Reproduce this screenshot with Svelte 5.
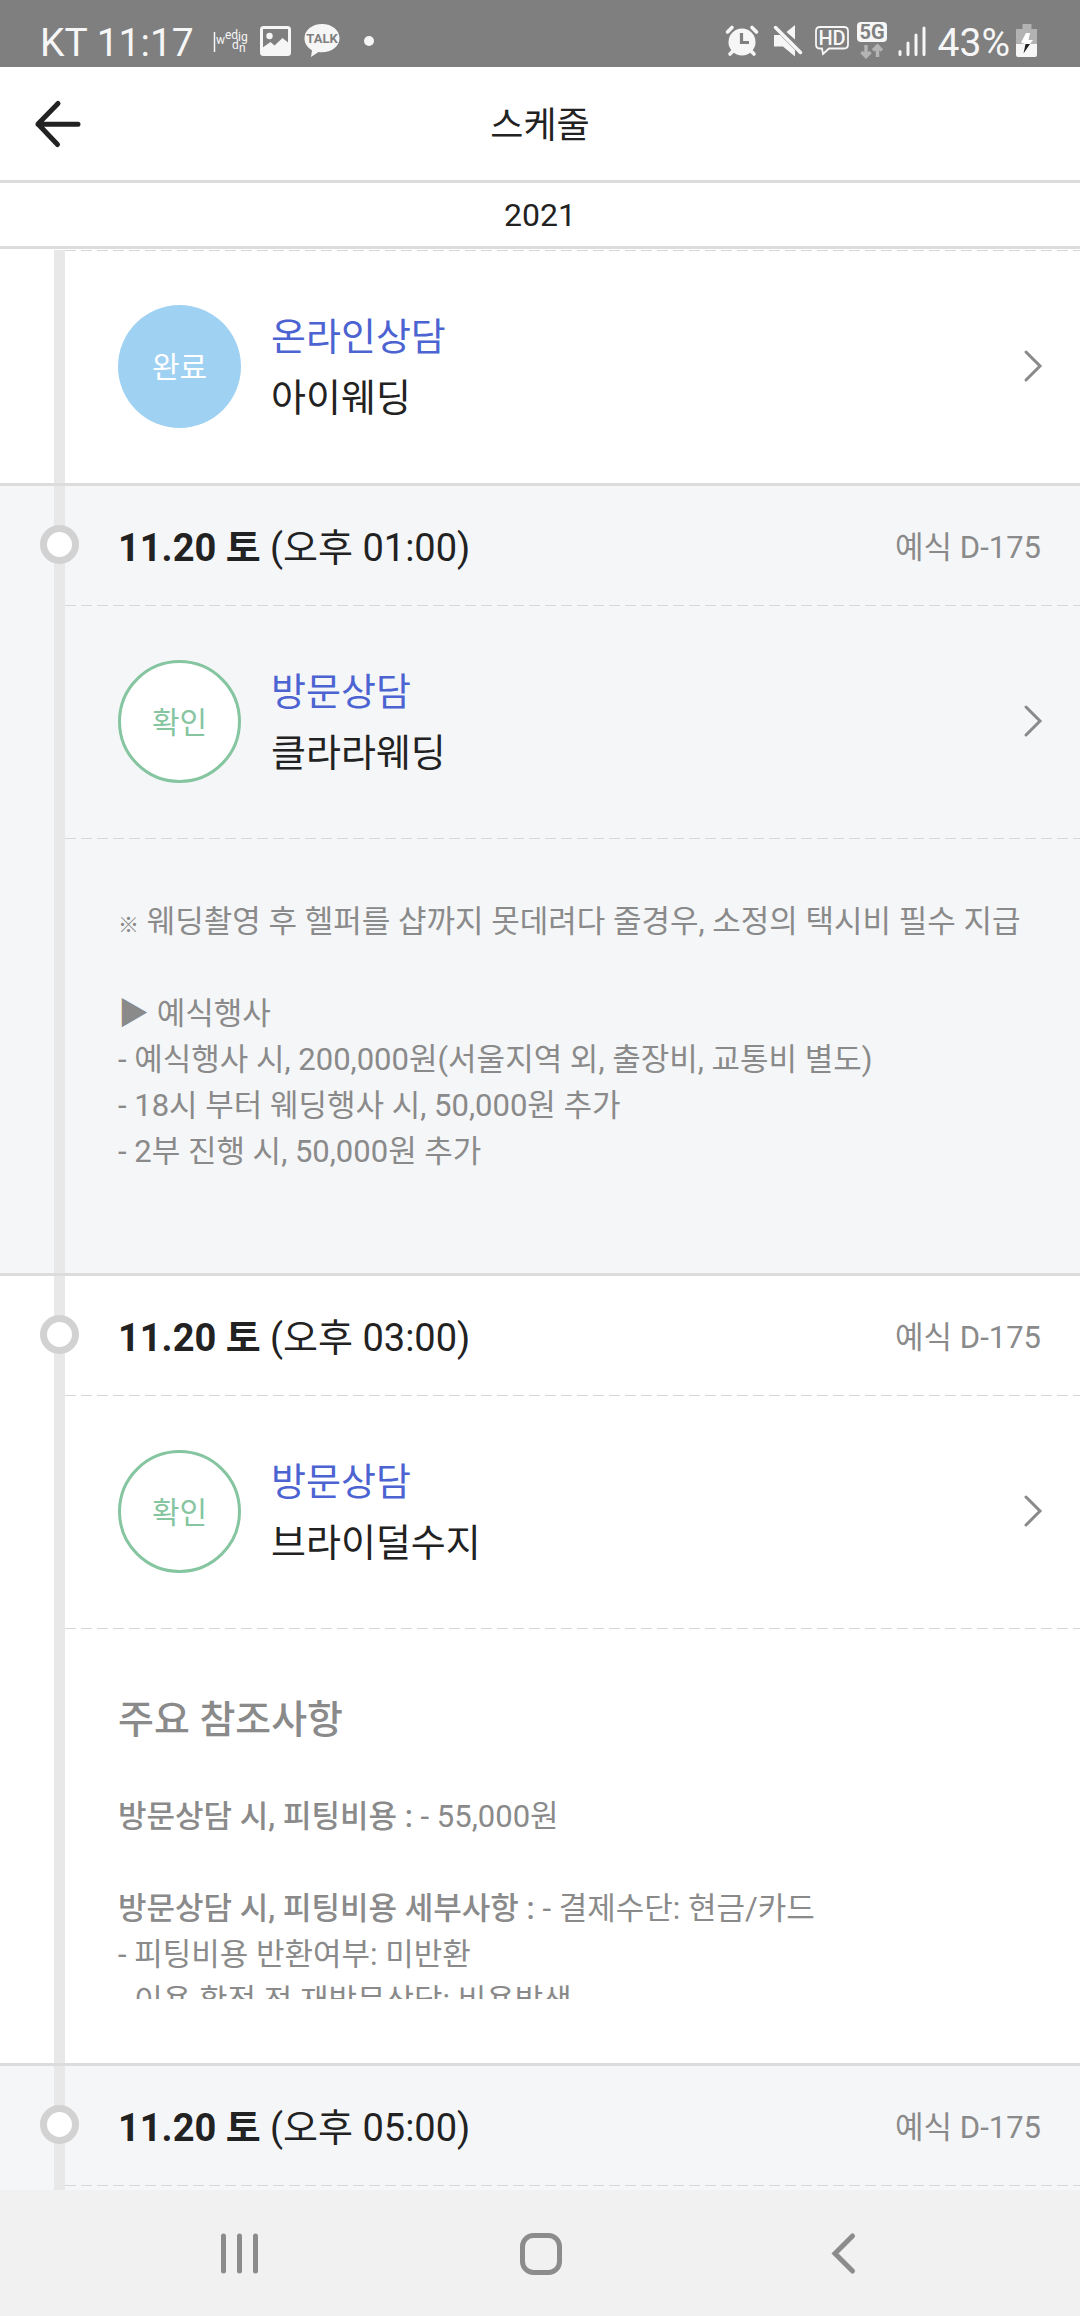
<script lang="ts">
  interface Note {
    mark?: string;
    label?: string;
    text: string;
  }

  interface Entry {
    date?: string;
    time?: string;
    dday?: string;
    status?: "done" | "confirm";
    kind?: string;
    shop?: string;
    heading?: string;
    notes?: Note[];
  }

  const statusLabel = { done: "완료", confirm: "확인" };

  const entries: Entry[] = [
    { status: "done", kind: "온라인상담", shop: "아이웨딩" },
    {
      date: "11.20 토",
      time: "(오후 01:00)",
      dday: "예식 D-175",
      status: "confirm",
      kind: "방문상담",
      shop: "클라라웨딩",
      notes: [
        { mark: "※", text: "웨딩촬영 후 헬퍼를 샵까지 못데려다 줄경우, 소정의 택시비 필수 지급" },
        { text: "" },
        { text: "▶ 예식행사" },
        { text: "- 예식행사 시, 200,000원(서울지역 외, 출장비, 교통비 별도)" },
        { text: "- 18시 부터 웨딩행사 시, 50,000원 추가" },
        { text: "- 2부 진행 시, 50,000원 추가" },
        { text: "" },
      ],
    },
    {
      date: "11.20 토",
      time: "(오후 03:00)",
      dday: "예식 D-175",
      status: "confirm",
      kind: "방문상담",
      shop: "브라이덜수지",
      heading: "주요 참조사항",
      notes: [
        { label: "방문상담 시, 피팅비용 :", text: "- 55,000원" },
        { text: "" },
        { label: "방문상담 시, 피팅비용 세부사항 :", text: "- 결제수단: 현금/카드" },
        { text: "- 피팅비용 반환여부: 미반환" },
        { text: "- 이용 확정 전 재방문상담: 비용발생" },
      ],
    },
    { date: "11.20 토", time: "(오후 05:00)", dday: "예식 D-175" },
  ];
</script>

<div class="app">
  <div class="status-bar">
    <div class="status-left">
      <span class="status-text">KT 11:17</span>
      <svg class="brand" width="34" height="34" viewBox="0 0 34 34">
        <path d="M1.500 8 V28" stroke="#f6f6f6" stroke-width="1.500" />
        <text>
          <tspan x="3" y="20">w</tspan><tspan x="12" y="15">ed</tspan><tspan x="19" y="25">d</tspan><tspan x="25" y="17">ig</tspan><tspan x="26" y="28">n</tspan>
        </text>
      </svg>
      <svg class="gallery" width="31" height="30" viewBox="0 0 31 30">
        <rect x="1.5" y="1.5" width="28" height="27" rx="2" fill="none" stroke="#f6f6f6" stroke-width="3" />
        <circle cx="9.5" cy="10" r="3.2" fill="#f6f6f6" />
        <path d="M2 22 L10.500 16 L14.500 19.500 L22.500 12 L30 18 V28 H2 Z" fill="#f6f6f6" />
      </svg>
      <svg class="talk" width="36" height="34" viewBox="0 0 36 34">
        <path d="M18 0 C8 0 .5 6.200 .5 14.200 C.5 19.500 3.500 23.800 8 26.200 L7 33 L14.500 28 C26 29.500 35.500 23 35.500 14.200 C35.500 6.200 28 0 18 0 Z" fill="#f6f6f6" />
        <text x="18" y="19" text-anchor="middle">TALK</text>
      </svg>
      <span class="more"></span>
    </div>
    <div class="status-right">
      <svg width="34" height="32" viewBox="0 0 34 32">
        <g stroke="#f6f6f6" stroke-width="3.600" stroke-linecap="round">
          <path d="M2.500 7 L7 2.500 M31.500 7 L27 2.500" />
          <path d="M5 29 L9 25 M29 29 L25 25" />
        </g>
        <circle cx="17" cy="17" r="13.500" fill="#f6f6f6" />
        <path d="M16.500 8 V17.500 H24" fill="none" stroke="#7f7f7f" stroke-width="3.200" />
      </svg>
      <svg class="mute" width="30" height="32" viewBox="0 0 30 32">
        <path d="M1 10 H7 L22 25 V31.500 L10 21.500 H1 Z M13.500 7 L22 0 V14.500 Z" fill="#f6f6f6" />
        <path d="M2.500 2.500 L27.500 27.500" stroke="#f6f6f6" stroke-width="3.500" stroke-linecap="round" />
      </svg>
      <svg class="hd" width="34" height="30" viewBox="0 0 34 30">
        <path d="M5 1 H29 Q33 1 33 5 V18.500 Q33 22.500 29 22.500 H14 L8 28 L7 22.500 H5 Q1 22.500 1 18.500 V5 Q1 1 5 1 Z" fill="none" stroke="#f6f6f6" stroke-width="1.800" />
        <text x="17" y="19" text-anchor="middle">HD</text>
      </svg>
      <svg class="network" width="30" height="38" viewBox="0 0 30 38">
        <rect width="30" height="20" rx="4" fill="#f6f6f6" />
        <text x="15" y="17" text-anchor="middle">5G</text>
        <path d="M9 23 V34 M4.500 30 L9 34.500 L13.500 30 M20.500 35 V25 M16 28.500 L20.500 24 L25 28.500" fill="none" stroke="#b4b4b4" stroke-width="3.500" />
      </svg>
      <svg class="signal" width="28" height="30" viewBox="0 0 28 30">
        <path d="M2 25.500 V28.500 M10 17 V28.500 M18 9 V28.500 M26 2 V28.500" stroke="#f6f6f6" stroke-width="3" stroke-linecap="round" />
      </svg>
      <span class="status-text">43%</span>
      <svg class="battery" width="22" height="34" viewBox="0 0 22 34">
        <path d="M6.500 0 H15.500 V5 H21 V20 H0 V5 H6.500 Z" fill="#b2b2b2" />
        <path d="M0 20 H21 V31 Q21 33 19 33 H2 Q0 33 0 31 Z" fill="#f6f6f6" />
        <path d="M10 9 H14 L12.500 16 H17 L14 20 H9 L5 18.500 Z" fill="#fff" />
        <path d="M9.500 20 H14 L7.500 29.500 Z" fill="#222" />
      </svg>
    </div>
  </div>

  <header class="header">
    <button class="back" aria-label="뒤로">
      <svg width="46" height="46" viewBox="0 0 46 46">
        <path d="M23 2.500 L3 23 L22.500 43.500 M3 23.300 H43" fill="none" stroke="#222" stroke-width="5" stroke-linecap="round" stroke-linejoin="round" />
      </svg>
    </button>
    <h1>스케줄</h1>
  </header>
  <div class="year">2021</div>

  <main class="timeline">
    {#each entries as entry}
      <section class="entry">
        <div class="rail">
          {#if entry.date}<span class="dot"></span>{/if}
        </div>
        <div class="body">
          {#if entry.date}
            <div class="when">
              <h2><b>{entry.date}</b> {entry.time}</h2>
              <span class="dday">{entry.dday}</span>
            </div>
          {/if}
          <div class="dash"></div>
          {#if entry.status}
            <a class="card" href="#detail">
              <span class="badge badge--{entry.status}">{statusLabel[entry.status]}</span>
              <span class="info">
                <span class="kind">{entry.kind}</span>
                <span>{entry.shop}</span>
              </span>
              <svg width="18" height="32" viewBox="0 0 18 32">
                <path d="M2 2 L16 16 L2 30" fill="none" stroke="#8a8a8a" stroke-width="3" stroke-linecap="round" />
              </svg>
            </a>
          {/if}
          {#if entry.notes}
            <div class="dash"></div>
            <div class="notes">
              {#if entry.heading}<h3>{entry.heading}</h3>{/if}
              {#each entry.notes as note}
                <p>
                  {#if note.mark}<span class="mark">{note.mark}</span>{/if}
                  {#if note.label}<b>{note.label}</b>{/if}
                  {note.text}
                </p>
              {/each}
            </div>
          {/if}
        </div>
      </section>
    {/each}
  </main>

  <nav class="nav">
    <button aria-label="최근 앱">
      <svg width="44" height="44" viewBox="0 0 44 44">
        <path d="M6.500 5 V40 M22.500 5 V40 M38.500 5 V40" stroke="#8c8c8c" stroke-width="5" stroke-linecap="round" />
      </svg>
    </button>
    <button aria-label="홈">
      <svg width="44" height="44" viewBox="0 0 44 44">
        <rect x="4.500" y="4.500" width="37" height="37" rx="11" fill="none" stroke="#8c8c8c" stroke-width="5" />
      </svg>
    </button>
    <button aria-label="이전">
      <svg width="44" height="44" viewBox="0 0 44 44">
        <path d="M33.500 5 L16 22.500 L33.500 40" fill="none" stroke="#8c8c8c" stroke-width="5" stroke-linecap="round" />
      </svg>
    </button>
  </nav>
</div>

<style>
  .app {
    display: flex;
    flex-direction: column;
    min-height: 100vh;
    background: #fff;
    color: #222;
    font-family: Roboto, "Noto Sans CJK KR", sans-serif;
  }
  h1, h2, h3, p {
    margin: 0;
    font-weight: 400;
  }
  button {
    display: flex;
    padding: 0;
    border: 0;
    background: none;
  }
  svg {
    display: block;
    flex-shrink: 0;
    overflow: visible;
  }

  .status-bar {
    display: flex;
    justify-content: space-between;
    height: 67px;
    padding: 14px 42px 0 40px;
    box-sizing: border-box;
    background: #7f7f7f;
    color: #f6f6f6;
  }
  .status-left,
  .status-right {
    display: flex;
    align-items: center;
    height: 53px;
  }
  .status-text {
    padding-top: 4px;
    font-size: 39px;
    line-height: 52px;
  }
  .status-bar text {
    fill: #f6f6f6;
    font-family: Roboto, sans-serif;
  }
  .brand {
    margin-left: 19px;
  }
  .brand text {
    font-size: 12px;
  }
  .gallery,
  .talk {
    margin-left: 13px;
  }
  .talk text {
    fill: #7f7f7f;
    font-size: 13px;
    font-weight: 700;
  }
  .more {
    width: 10px;
    height: 10px;
    margin-left: 24px;
    border-radius: 50%;
    background: #f6f6f6;
  }
  .mute {
    margin-left: 14px;
  }
  .hd {
    margin-left: 12px;
  }
  .hd text {
    font-size: 20px;
    font-weight: 500;
  }
  .network {
    margin-left: 8px;
  }
  .network text {
    fill: #7f7f7f;
    font-size: 20px;
    font-weight: 700;
  }
  .signal {
    margin: 0 12px 0 11px;
  }
  .battery {
    margin-left: 6px;
  }

  .header {
    display: grid;
    grid-template-columns: 1fr auto 1fr;
    align-items: center;
    height: 113px;
    padding: 0 35px;
    border-bottom: 3px solid #dcdcdc;
  }
  .header h1 {
    padding-top: 4px;
    font-size: 36px;
    line-height: 52px;
  }
  .year {
    padding-top: 2px;
    border-bottom: 3px solid #dcdcdc;
    font-size: 32px;
    line-height: 61px;
    text-align: center;
  }

  .timeline {
    display: flex;
    flex: 1;
    flex-direction: column;
    padding-top: 1px;
  }
  .entry {
    display: grid;
    grid-template-columns: 54px 11px 1fr;
  }
  .entry + .entry {
    border-top: 3px solid #dcdcdc;
  }
  .entry:nth-child(even) {
    background: #f5f6f8;
  }
  .entry:last-child {
    flex: 1;
  }
  .rail {
    position: relative;
    grid-column: 2;
    background: #e8e8e8;
  }
  .dot {
    position: absolute;
    top: 39px;
    left: -14px;
    width: 25px;
    height: 25px;
    border: 7px solid #d2d2d2;
    border-radius: 50%;
    background: #fff;
  }
  .body {
    min-width: 0;
  }
  .dash {
    height: 1px;
    background: repeating-linear-gradient(90deg, #d6d7d9 0 11px, transparent 11px 16px);
  }
  .when {
    display: flex;
    align-items: center;
    justify-content: space-between;
    height: 119px;
    padding: 4px 39px 0 53px;
    box-sizing: border-box;
  }
  .when h2 {
    font-size: 38px;
    line-height: 56px;
  }
  .dday {
    color: #8a8a8a;
    font-size: 31px;
    line-height: 46px;
  }

  .card {
    display: flex;
    align-items: center;
    padding: 52px 38px 54px 53px;
    color: inherit;
    text-decoration: none;
  }
  .badge {
    display: flex;
    align-items: center;
    justify-content: center;
    flex-shrink: 0;
    width: 123px;
    height: 123px;
    padding-bottom: 2px;
    box-sizing: border-box;
    border-radius: 50%;
    font-size: 30px;
  }
  .badge--done {
    background: #9fd1f2;
    color: #fff;
  }
  .badge--confirm {
    border: 3px solid #85c5a0;
    background: #fff;
    color: #85c5a0;
  }
  .info {
    display: flex;
    flex: 1;
    flex-direction: column;
    margin-left: 30px;
    padding-top: 4px;
    font-size: 38px;
    line-height: 61px;
  }
  .kind {
    color: #4c63d2;
  }

  .notes {
    max-height: 310px;
    margin: 60px 39px 64px 53px;
    overflow: hidden;
    color: #8a8a8a;
    font-size: 31px;
    line-height: 46px;
  }
  .notes h3 {
    margin-bottom: 43px;
    font-size: 39px;
    font-weight: 500;
    line-height: 62px;
  }
  .notes p {
    min-height: 46px;
    white-space: nowrap;
  }
  .notes b {
    font-weight: 500;
  }
  .mark {
    font-size: 21px;
    font-weight: 700;
    line-height: 1;
  }

  .nav {
    display: flex;
    align-items: center;
    height: 126px;
    padding: 0 88px;
    background: #f1f1f1;
  }
  .nav button {
    flex: 1;
    justify-content: center;
  }
</style>
